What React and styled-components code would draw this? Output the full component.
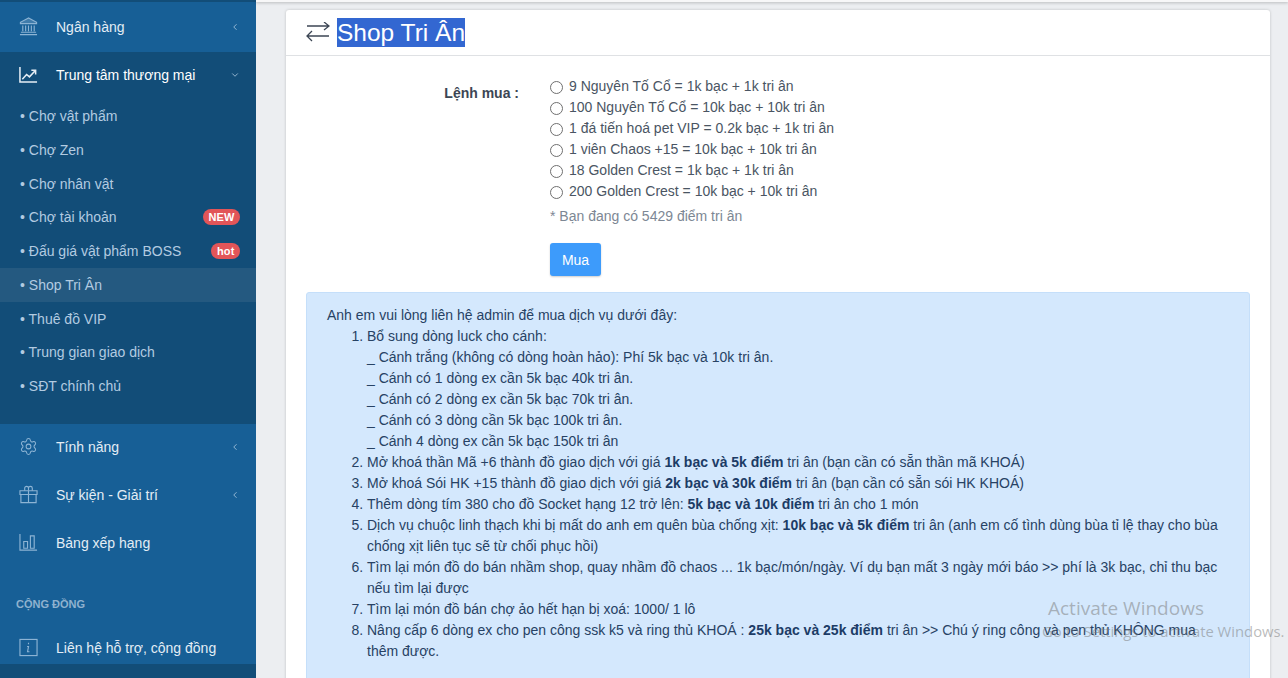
import React from 'react';
import styled, { createGlobalStyle } from 'styled-components';
import { ChevronLeft, ChevronDown, Settings } from 'lucide-react';

const GlobalStyle = createGlobalStyle`
  html, body {
    margin: 0;
    height: 678px;
    overflow: hidden;
    background: #eceef1;
    font-family: "Liberation Sans", Arial, sans-serif;
  }
`

const Page = styled.div`
  display: flex;
  width: 1288px;
  height: 678px;
  overflow: hidden;
  position: relative;
`

const Sidebar = styled.nav`
  width: 256px;
  flex: none;
  height: 678px;
  overflow: hidden;
  background: #175f96;
  padding-top: 1px;
  box-sizing: border-box;
  border-top: 2px solid #124d78;
`

const NavItem = styled.div`
  display: flex;
  align-items: center;
  height: ${p => p.$height || 48}px;
  padding: 0 16px 0 19px;
  color: ${p => (p.$open ? '#ffffff' : '#e3edf5')};
  font-size: 14px;
  svg.ico { width: 19px; height: 19px; flex: none; color: ${p => (p.$open ? '#e6eef5' : '#8db4d4')}; }
`

const RaisedNavItem = styled(NavItem)`
  box-sizing: border-box;
  padding-bottom: 2px;
`

const NavLabel = styled.span`
  margin-left: 18px;
  flex: 1;
  white-space: nowrap;
`

const SubPanel = styled.div`
  background: #124d78;
  padding-bottom: 20.75px;
`

const SubItem = styled.div`
  display: flex;
  align-items: center;
  justify-content: space-between;
  height: 33.75px;
  padding: 0 16px 0 20px;
  color: #b2cbe1;
  font-size: 14px;
  background: ${p => (p.$active ? '#245980' : 'transparent')};
`

const Badge = styled.span`
  background: #e25558;
  color: #fff;
  font-size: 11px;
  font-weight: 700;
  letter-spacing: 0.15px;
  line-height: 16px;
  height: 16px;
  padding: 0 5.5px;
  border-radius: 8px;
`

const NavGroup = styled.div`
  margin-top: -1px;
`

const SectionTitle = styled.div`
  margin: 29px 0 20px;
  padding-left: 16px;
  line-height: 16px;
  color: #8fb2cf;
  font-size: 11px;
  font-weight: 700;
`

const BottomBar = styled.div`
  height: 20px;
  background: #124d78;
`

const Main = styled.main`
  flex: 1;
  min-width: 0;
  padding: 0 18px 0 30px;
  position: relative;
`

const TopBar = styled.div`
  position: absolute;
  left: 0;
  right: 0;
  top: 0;
  height: 2px;
  background: #f7f7f8;
  box-shadow: 0 1px 3px rgba(0, 0, 0, 0.25);
`

const Card = styled.section`
  margin-top: 10px;
  background: #fff;
  box-shadow: 0 0 3px rgba(0, 0, 0, 0.2);
  border-radius: 3px 3px 0 0;
`

const CardHeader = styled.header`
  display: flex;
  align-items: center;
  height: 45px;
  padding-left: 20px;
  border-bottom: 1px solid #dfe1e4;
`

const Title = styled.h1`
  margin: 0 0 0 7px;
  font-size: 24.5px;
  font-weight: 400;
  line-height: 29px;
  color: #fff;
  background: #3367d1;
`

const CardBody = styled.div`
  padding: 19px 20px 0;
`

const FormRow = styled.div`
  display: flex;
`

const FieldLabel = styled.label`
  width: 213px;
  padding-top: 10px;
  box-sizing: border-box;
  text-align: right;
  color: #3c4654;
  font-size: 14px;
  font-weight: 700;
`

const Options = styled.div`
  margin-left: 31px;
`

const OptionRow = styled.label`
  display: flex;
  align-items: center;
  height: 21px;
  color: #4a5563;
  font-size: 14px;
`

const Radio = styled.span`
  width: 11px;
  height: 11px;
  border: 1px solid #6f6f6f;
  border-radius: 50%;
  margin: 3px 6px 0 0;
  flex: none;
  background: #fff;
`

const Hint = styled.div`
  margin-top: 5px;
  color: #7d8794;
  font-size: 14px;
  line-height: 20px;
`

const BuyButton = styled.button`
  display: block;
  margin-top: 17px;
  width: 51px;
  height: 33px;
  border: 0;
  border-radius: 3px;
  background: #3d9bfb;
  color: #fff;
  font: 14px "Liberation Sans", Arial, sans-serif;
  box-shadow: 0 1px 2px rgba(0, 0, 0, 0.2);
`

const Notice = styled.div`
  margin-top: 16px;
  background: #d4e8fd;
  border: 1px solid #c5dffa;
  border-radius: 3px;
  padding: 12px 20px 20px;
  color: #274264;
  font-size: 14px;
  line-height: 21px;
  height: 500px;
  box-sizing: border-box;
`

const NoticeList = styled.ol`
  margin: 0;
  padding-left: 40px;
  b { color: #1c3c66; }
`

const Indented = styled.div`
  white-space: nowrap;
`

const Watermark = styled.div`
  position: absolute;
  left: 1048px;
  top: 596px;
  color: rgba(120, 120, 120, 0.5);
  font-family: "Open Sans", sans-serif;
  pointer-events: none;
`

const WatermarkTitle = styled.div`
  font-size: 19px;
  line-height: 24px;
`

const WatermarkSub = styled.div`
  font-size: 14.8px;
  line-height: 18px;
  white-space: nowrap;
  margin: 2px 0 0 -6px;
`

const Icon = ({ children, width = 1.2 }) => (
  <svg className="ico" viewBox="0 0 20 20" fill="none" stroke="currentColor" strokeWidth={width}>{children}</svg>
)

const BankIcon = () => (
  <Icon>
    <path d="M10 1 1.5 5.5V7h17V5.5z" fill="currentColor" fillOpacity="0.35" />
    <path d="M4 9v6M7 9v6M10 9v6M13 9v6M16 9v6M2 16h16M1 18.5h18" />
  </Icon>
)
const ChartIcon = () => (
  <Icon width={1.6}>
    <path d="M1 2v16h18" />
    <path d="M3.5 15 8 10l3 2.5 6-6.5M13 5.5h4.5V10" />
  </Icon>
)
const GiftIcon = () => (
  <Icon>
    <path d="M1 6h18v4H1zM2 10v8.5h16V10M10 6v12.5" />
    <path d="M6 6V3.5a2 2 0 0 1 4 0V6M10 6V3.5a2 2 0 0 1 4 0V6" />
  </Icon>
)
const BarsIcon = () => (
  <Icon>
    <path d="M1 1v17h18" />
    <path d="M5 9h4v7H5zM12 3h4v13h-4z" />
  </Icon>
)
const InfoIcon = () => (
  <Icon>
    <rect x="1" y="1.5" width="18" height="17" />
    <path d="M10 5v1.5M8.5 9H10l-1 5.5h2" />
  </Icon>
)
const SwapIcon = () => (
  <svg width="24" height="22" viewBox="0 0 24 22" fill="none" stroke="#3c4654" strokeWidth="1.3">
    <path d="M1 4h22M18 0l5 4-5 4M23 14H1M6 9l-5 5 5 5" />
  </svg>
)

const options = [
  '9 Nguyên Tố Cổ = 1k bạc + 1k tri ân',
  '100 Nguyên Tố Cổ = 10k bạc + 10k tri ân',
  '1 đá tiến hoá pet VIP = 0.2k bạc + 1k tri ân',
  '1 viên Chaos +15 = 10k bạc + 10k tri ân',
  '18 Golden Crest = 1k bạc + 1k tri ân',
  '200 Golden Crest = 10k bạc + 10k tri ân',
]

const subItems = [
  { label: 'Chợ vật phẩm' },
  { label: 'Chợ Zen' },
  { label: 'Chợ nhân vật' },
  { label: 'Chợ tài khoản', badge: 'NEW' },
  { label: 'Đấu giá vật phẩm BOSS', badge: 'hot' },
  { label: 'Shop Tri Ân', active: true },
  { label: 'Thuê đồ VIP' },
  { label: 'Trung gian giao dịch' },
  { label: 'SĐT chính chủ' },
]

export default function App() {
  return (
    <Page>
      <GlobalStyle />
      <Sidebar>
        <RaisedNavItem $height={49}>
          <BankIcon />
          <NavLabel>Ngân hàng</NavLabel>
          <ChevronLeft size={10} color="#a9c6de" />
        </RaisedNavItem>
        <SubPanel>
          <RaisedNavItem $open $height={47.25}>
            <ChartIcon />
            <NavLabel>Trung tâm thương mại</NavLabel>
            <ChevronDown size={10} color="#a9c6de" />
          </RaisedNavItem>
          {subItems.map(item => (
            <SubItem key={item.label} $active={item.active}>
              <span>• {item.label}</span>
              {item.badge && <Badge>{item.badge}</Badge>}
            </SubItem>
          ))}
        </SubPanel>
        <NavGroup>
          <NavItem>
            <Settings className="ico" strokeWidth={1.3} />
            <NavLabel>Tính năng</NavLabel>
            <ChevronLeft size={10} color="#a9c6de" />
          </NavItem>
          <NavItem>
            <GiftIcon />
            <NavLabel>Sự kiện - Giải trí</NavLabel>
            <ChevronLeft size={10} color="#a9c6de" />
          </NavItem>
          <NavItem>
            <BarsIcon />
            <NavLabel>Bảng xếp hạng</NavLabel>
          </NavItem>
          <SectionTitle>CỘNG ĐỒNG</SectionTitle>
          <NavItem $height={32}>
            <InfoIcon />
            <NavLabel>Liên hệ hỗ trợ, cộng đồng</NavLabel>
          </NavItem>
          <BottomBar />
        </NavGroup>
      </Sidebar>
      <Main>
        <TopBar />
        <Card>
          <CardHeader>
            <SwapIcon />
            <Title>Shop Tri Ân</Title>
          </CardHeader>
          <CardBody>
            <FormRow>
              <FieldLabel>Lệnh mua :</FieldLabel>
              <Options>
                {options.map(o => (
                  <OptionRow key={o}>
                    <Radio />
                    {o}
                  </OptionRow>
                ))}
                <Hint>* Bạn đang có 5429 điểm tri ân</Hint>
                <BuyButton>Mua</BuyButton>
              </Options>
            </FormRow>
            <Notice>
              Anh em vui lòng liên hệ admin để mua dịch vụ dưới đây:
              <NoticeList>
                <li>
                  Bổ sung dòng luck cho cánh:
                  <Indented>_ Cánh trắng (không có dòng hoàn hảo): Phí 5k bạc và 10k tri ân.</Indented>
                  <Indented>_ Cánh có 1 dòng ex cần 5k bạc 40k tri ân.</Indented>
                  <Indented>_ Cánh có 2 dòng ex cần 5k bạc 70k tri ân.</Indented>
                  <Indented>_ Cánh có 3 dòng cần 5k bạc 100k tri ân.</Indented>
                  <Indented>_ Cánh 4 dòng ex cần 5k bạc 150k tri ân</Indented>
                </li>
                <li>Mở khoá thần Mã +6 thành đồ giao dịch với giá <b>1k bạc và 5k điểm</b> tri ân (bạn cần có sẵn thần mã KHOÁ)</li>
                <li>Mở khoá Sói HK +15 thành đồ giao dịch với giá <b>2k bạc và 30k điểm</b> tri ân (bạn cần có sẵn sói HK KHOÁ)</li>
                <li>Thêm dòng tím 380 cho đồ Socket hạng 12 trở lên: <b>5k bạc và 10k điểm</b> tri ân cho 1 món</li>
                <li>Dịch vụ chuộc linh thạch khi bị mất do anh em quên bùa chống xịt: <b>10k bạc và 5k điểm</b> tri ân (anh em cố tình dùng bùa tỉ lệ thay cho bùa chống xịt liên tục sẽ từ chối phục hồi)</li>
                <li>Tìm lại món đồ do bán nhầm shop, quay nhầm đồ chaos ... 1k bạc/món/ngày. Ví dụ bạn mất 3 ngày mới báo &gt;&gt; phí là 3k bạc, chỉ thu bạc nếu tìm lại được</li>
                <li>Tìm lại món đồ bán chợ ảo hết hạn bị xoá: 1000/ 1 lô</li>
                <li>Nâng cấp 6 dòng ex cho pen công ssk k5 và ring thủ KHOÁ : <b>25k bạc và 25k điểm</b> tri ân &gt;&gt; Chú ý ring công và pen thủ KHÔNG mua thêm được.</li>
              </NoticeList>
            </Notice>
          </CardBody>
        </Card>
      </Main>
      <Watermark>
        <WatermarkTitle>Activate Windows</WatermarkTitle>
        <WatermarkSub>Go to Settings to activate Windows.</WatermarkSub>
      </Watermark>
    </Page>
  );
}
